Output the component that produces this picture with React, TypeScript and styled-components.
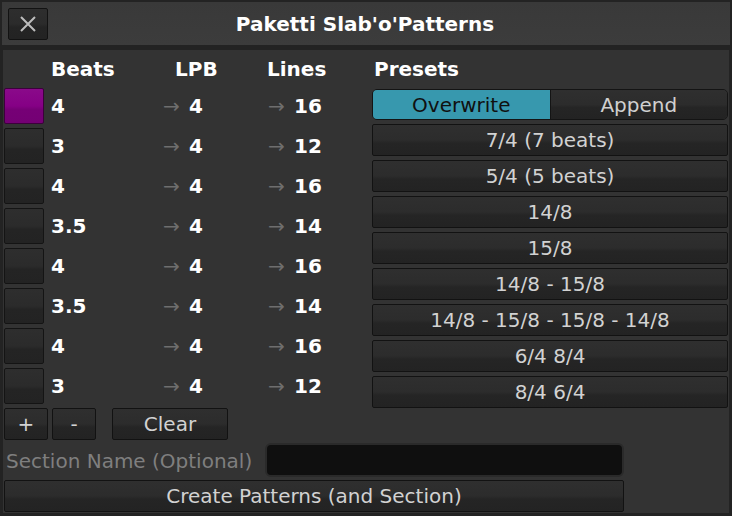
import { useState } from 'react';
import styled, { createGlobalStyle } from 'styled-components';

const GlobalStyle = createGlobalStyle`
  html, body {
    margin: 0;
    padding: 0;
    background: #262626;
  }
  * {
    box-sizing: border-box;
  }
`;

const Window = styled.div`
  width: 732px;
  height: 516px;
  background: #232323;
  padding: 2px 2px 3px;
  display: flex;
  flex-direction: column;
  font-family: 'DejaVu Sans', 'Liberation Sans', sans-serif;
  font-size: 20px;
  color: #d4d4d4;
  overflow: hidden;
`;

const TitleBar = styled.div`
  position: relative;
  height: 43px;
  background: linear-gradient(#393939, #3c3c3c);
  display: flex;
  align-items: center;
  justify-content: center;
  padding-right: 2px;
`;

const Title = styled.span`
  font-weight: bold;
  color: #ffffff;
`;

const CloseButton = styled.button`
  position: absolute;
  left: 6px;
  top: 6px;
  width: 40px;
  height: 32px;
  padding: 0;
  display: flex;
  align-items: center;
  justify-content: center;
  background: linear-gradient(#2e2e2e 0%, #2b2b2b 50%, #242424 60%, #232323 100%);
  border: 1px solid #121212;
  border-radius: 2px;
`;

const Content = styled.div`
  flex: 1;
  margin: 5px 1px 0;
  background: #333333;
  padding: 0 1px 1px;
  display: flex;
  flex-direction: column;
  gap: 3px;
`;

const TopGrid = styled.div`
  display: grid;
  grid-template-columns: 360px 356px;
  column-gap: 8px;
  align-items: start;
`;

const Column = styled.div`
  display: flex;
  flex-direction: column;
  gap: 4px;
`;

// header text sits a little lower than the middle of its band
const HeaderRow = styled.div<{ $pad?: number }>`
  height: 34px;
  padding-top: 4px;
  display: flex;
  align-items: center;
  padding-left: ${(p) => p.$pad ?? 0}px;
  font-weight: bold;
  color: #ffffff;
`;

const HeaderCell = styled.span<{ $w: number }>`
  width: ${(p) => p.$w}px;
`;

const Row = styled.div`
  height: 36px;
  display: flex;
  align-items: center;
`;

const Swatch = styled.div<{ $active?: boolean }>`
  width: 40px;
  height: 36px;
  margin-right: 7px;
  border-radius: 2px;
  border: 1px solid ${(p) => (p.$active ? '#3c003c' : '#141414')};
  background: ${(p) =>
    p.$active
      ? 'linear-gradient(#8a0a8a 0%, #850085 50%, #760076 60%, #740074 100%)'
      : 'linear-gradient(#2e2e2e 0%, #2b2b2b 50%, #242424 60%, #232323 100%)'};
`;

const Value = styled.span<{ $w: number }>`
  width: ${(p) => p.$w}px;
  font-weight: bold;
  color: #ffffff;
  display: flex;
  align-items: center;
`;

const Arrow = styled.span`
  font-weight: normal;
  color: #6e6e6e;
  width: 26px;
`;

const Button = styled.button<{ $w?: number }>`
  width: ${(p) => (p.$w ? `${p.$w}px` : '100%')};
  height: 32px;
  padding: 0;
  font-family: inherit;
  font-size: 20px;
  color: #d2d2d2;
  background: linear-gradient(#2f2f2f 0%, #2c2c2c 50%, #252525 60%, #232323 100%);
  border: 1px solid #121212;
  border-radius: 2px;
  cursor: pointer;
`;

const ButtonRow = styled.div`
  display: flex;
  gap: 4px;
`;

const Switch = styled.div`
  height: 31px;
  margin-top: 1px;
  display: flex;
  border-radius: 5px;
  overflow: hidden;
  border: 1px solid #141414;
`;

const SwitchOption = styled.button<{ $on?: boolean }>`
  flex: 1;
  padding: 0;
  font-family: inherit;
  font-size: 20px;
  border: none;
  color: ${(p) => (p.$on ? '#101010' : '#d0d0d0')};
  background: ${(p) =>
    p.$on
      ? '#3798ae'
      : 'linear-gradient(#2f2f2f 0%, #2c2c2c 50%, #252525 60%, #232323 100%)'};
  border-left: ${(p) => (p.$on ? 'none' : '1px solid #141414')};
`;

const SectionRow = styled.div`
  height: 34px;
  display: flex;
  align-items: center;
`;

const SectionLabel = styled.span`
  width: 261px;
  padding-left: 2px;
  padding-top: 2px;
  color: #7f7f7f;
`;

const NameInput = styled.input`
  width: 359px;
  height: 34px;
  background: #0f0f0f;
  border: 2px solid #2a2a2a;
  border-radius: 6px;
  color: #d2d2d2;
  font-family: inherit;
  font-size: 20px;
  outline: none;
`;

const CloseIcon = () => (
  <svg width="18" height="18" viewBox="0 0 18 18">
    <path d="M2 2 L16 16 M16 2 L2 16" stroke="#bdbdbd" strokeWidth="2" />
  </svg>
);

const rows = [
  { beats: '4', lpb: 4, lines: 16 },
  { beats: '3', lpb: 4, lines: 12 },
  { beats: '4', lpb: 4, lines: 16 },
  { beats: '3.5', lpb: 4, lines: 14 },
  { beats: '4', lpb: 4, lines: 16 },
  { beats: '3.5', lpb: 4, lines: 14 },
  { beats: '4', lpb: 4, lines: 16 },
  { beats: '3', lpb: 4, lines: 12 },
];

const presets = [
  '7/4 (7 beats)',
  '5/4 (5 beats)',
  '14/8',
  '15/8',
  '14/8 - 15/8',
  '14/8 - 15/8 - 15/8 - 14/8',
  '6/4 8/4',
  '8/4 6/4',
];

const App = () => {
  const [mode, setMode] = useState('overwrite');
  const [name, setName] = useState('');

  return (
    <Window>
      <GlobalStyle />
      <TitleBar>
        <CloseButton aria-label="Close">
          <CloseIcon />
        </CloseButton>
        <Title>Paketti Slab'o'Patterns</Title>
      </TitleBar>
      <Content>
        <TopGrid>
          <Column>
            <HeaderRow $pad={47}>
              <HeaderCell $w={124}>Beats</HeaderCell>
              <HeaderCell $w={92}>LPB</HeaderCell>
              <HeaderCell $w={80}>Lines</HeaderCell>
            </HeaderRow>
            {rows.map((row, i) => (
              <Row key={i}>
                <Swatch $active={i === 0} />
                <Value $w={112}>{row.beats}</Value>
                <Value $w={105}>
                  <Arrow>→</Arrow>
                  {row.lpb}
                </Value>
                <Value $w={80}>
                  <Arrow>→</Arrow>
                  {row.lines}
                </Value>
              </Row>
            ))}
            <ButtonRow>
              <Button $w={44}>+</Button>
              <Button $w={44}>-</Button>
              <Button $w={116} style={{ marginLeft: 12 }}>Clear</Button>
            </ButtonRow>
          </Column>
          <Column>
            <HeaderRow $pad={2}>Presets</HeaderRow>
            <Switch>
              <SwitchOption $on={mode === 'overwrite'} onClick={() => setMode('overwrite')}>
                Overwrite
              </SwitchOption>
              <SwitchOption $on={mode === 'append'} onClick={() => setMode('append')}>
                Append
              </SwitchOption>
            </Switch>
            {presets.map((p) => (
              <Button key={p}>{p}</Button>
            ))}
          </Column>
        </TopGrid>
        <SectionRow>
          <SectionLabel>Section Name (Optional)</SectionLabel>
          <NameInput value={name} onChange={(e) => setName(e.target.value)} />
        </SectionRow>
        <Button $w={620}>Create Patterns (and Section)</Button>
      </Content>
    </Window>
  );
};

export default App;
